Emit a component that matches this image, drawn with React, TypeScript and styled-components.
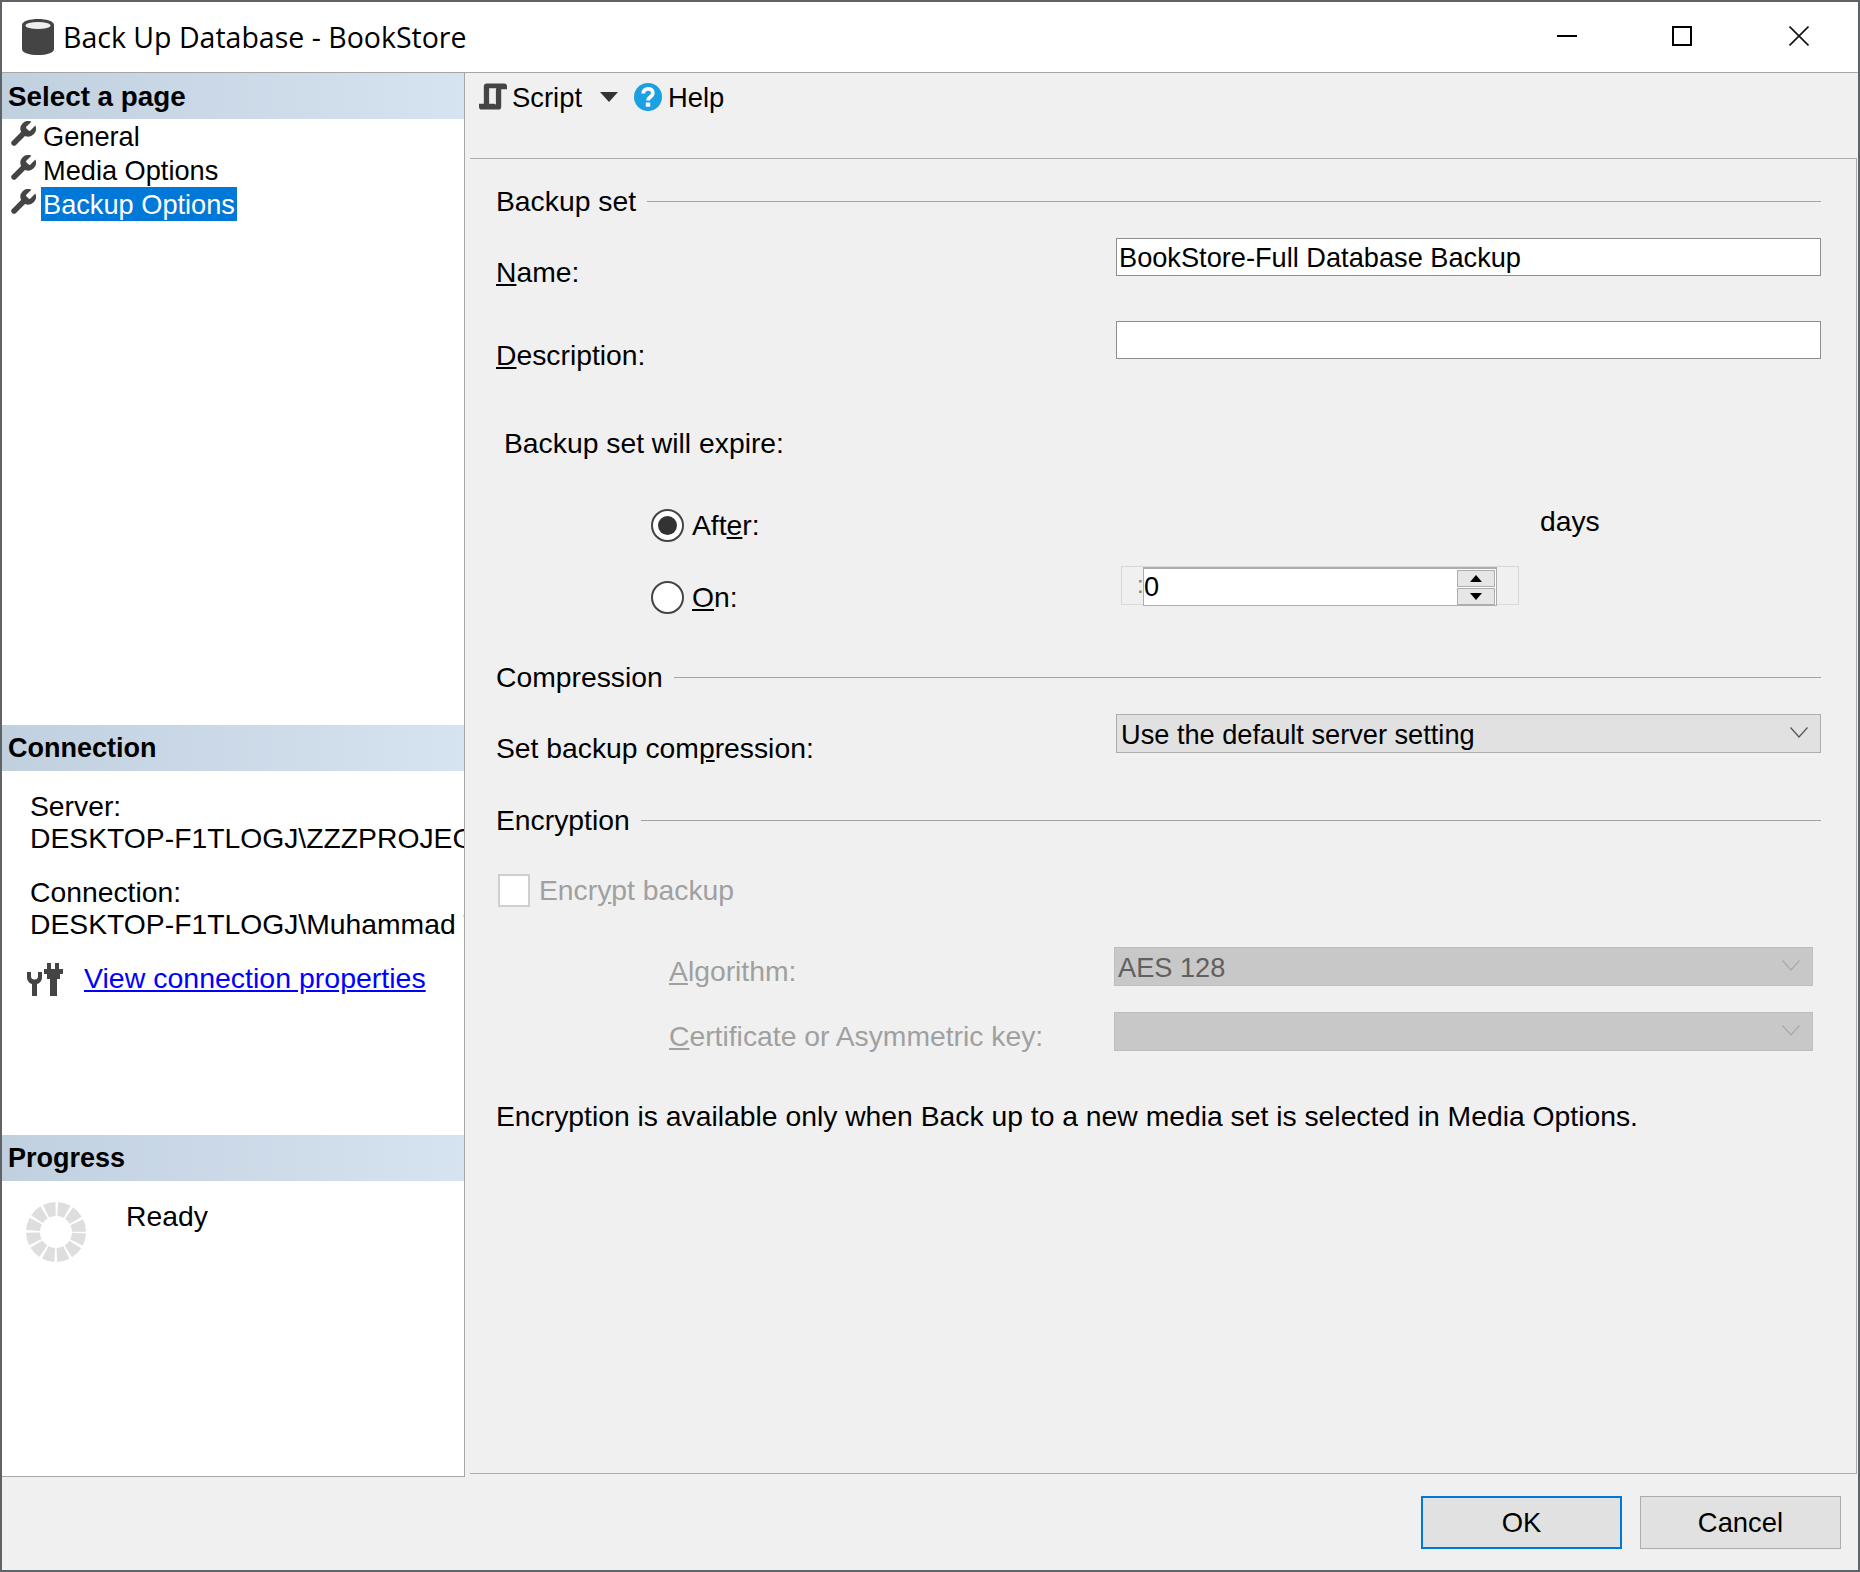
import React from "react";
import styled, { createGlobalStyle } from "styled-components";

const Global = createGlobalStyle`
  html, body { margin: 0; padding: 0; background: #f0f0f0; }
  body { font-family: "Liberation Sans", Arial, sans-serif; font-size: 28.3px; color: #000; }
  * { box-sizing: border-box; }
`;

const Win = styled.div`
  width: 1860px; height: 1572px; border: 2px solid #5f6368;
  display: flex; flex-direction: column; background: #f0f0f0; overflow: hidden;
`;
const TitleBar = styled.div`
  height: 71px; flex: none; background: #fff; border-bottom: 1px solid #a6a6a6;
  display: flex; align-items: center; padding-left: 20px;
`;
const TitleText = styled.div`
  font-family: "Open Sans", sans-serif; font-size: 28.5px; margin-left: 9px; margin-top: -1px; white-space: nowrap; flex: 1;
`;
const WinButtons = styled.div`
  display: flex; align-items: center; gap: 0; margin-right: 49px; margin-top: -2px;
`;
const WinBtn = styled.svg<{ $ml: number }>`
  width: 20px; height: 20px; margin-left: ${p => p.$ml}px; display: block;
`;
const Body = styled.div`
  flex: 1; display: flex; min-height: 0;
`;
const Sidebar = styled.div`
  width: 463px; height: 1404px; flex: none; background: #fff;
  border-right: 1px solid #a6a6a6; border-bottom: 1px solid #a6a6a6;
  display: flex; flex-direction: column;
`;
const Section = styled.div<{ $h?: number }>`
  height: ${p => (p.$h ? `${p.$h}px` : "auto")}; flex: ${p => (p.$h ? "none" : "1")}; overflow: hidden;
`;
const SectionHead = styled.div<{ $fs?: number }>`
  height: 46px; background: linear-gradient(90deg, #c1d0df, #d6e3f1);
  display: flex; align-items: center; padding: 1px 0 0 6px; font-weight: 700; font-size: ${p => p.$fs ?? 27}px;
`;
const PageItem = styled.div`
  height: 34px; display: flex; align-items: center; padding-left: 8px;
`;
const PageIcon = styled.svg`
  width: 26px; height: 26px; flex: none; margin-top: -4px;
`;
const PageName = styled.span<{ $sel?: boolean }>`
  margin-left: 5px; padding: 2px 2px 0; height: 34px; line-height: 32px; white-space: nowrap; font-size: 27.2px;
  background: ${p => (p.$sel ? "#0078d7" : "transparent")};
  color: ${p => (p.$sel ? "#fff" : "#000")};
`;
const ConnBlock = styled.div`
  padding: 19px 0 0 28px; line-height: 32px; white-space: nowrap; overflow: hidden;
`;
const ConnPara = styled.div`
  margin-bottom: 22px;
`;
const LinkRow = styled.div`
  display: flex; align-items: center; margin: 1px 0 0 24px;
`;
const LinkIcon = styled.svg`
  width: 38px; height: 34px; flex: none;
`;
const BlueLink = styled.a`
  color: #0000ff; text-decoration: underline; margin-left: 20px; white-space: nowrap; margin-top: -3px; font-size: 28.5px;
`;
const ProgressRow = styled.div`
  display: flex; align-items: flex-start; padding: 19px 0 0 22px;
`;
const SpinnerSvg = styled.svg`
  width: 64px; height: 64px; flex: none;
`;
const Ready = styled.div`
  margin-left: 38px; line-height: 30px; margin-top: 1px;
`;
const Main = styled.div`
  flex: 1; display: flex; flex-direction: column; padding-left: 5px; min-width: 0;
`;
const Toolbar = styled.div`
  height: 85px; flex: none; display: flex; align-items: flex-start; padding: 10px 0 0 9px; font-size: 27.4px;
`;
const ToolIcon = styled.svg<{ $ml?: number }>`
  width: 28px; height: 28px; flex: none; margin-left: ${p => p.$ml ?? 0}px;
`;
const ToolText = styled.span<{ $ml: number }>`
  margin-left: ${p => p.$ml}px; line-height: 30px;
`;
const Caret = styled.div`
  width: 0; height: 0; margin: 9px 0 0 18px; border-left: 9px solid transparent; border-right: 9px solid transparent;
  border-top: 10px solid #333;
`;
const Pane = styled.div`
  width: 1387px; height: 1316px; flex: none; border: 1px solid #adadad; border-left: 0;
  padding: 0 35px 0 26px; display: flex; flex-direction: column;
`;
const GroupHead = styled.div<{ $mt: number }>`
  display: flex; align-items: center; gap: 11px; height: 30px; margin-top: ${p => p.$mt}px; white-space: nowrap;
  &::after { content: ""; flex: 1; height: 1px; background: #a3a3a3; }
`;
const FieldRow = styled.div<{ $mt: number; $h: number; $cols?: string }>`
  display: grid; grid-template-columns: ${p => p.$cols ?? "620px 705px"}; height: ${p => p.$h}px; margin-top: ${p => p.$mt}px;
`;
const FieldLabel = styled.div<{ $pt?: number; $off?: boolean; $pl?: number }>`
  padding-top: ${p => p.$pt ?? 19}px; padding-left: ${p => p.$pl ?? 0}px; line-height: 30px; white-space: nowrap;
  color: ${p => (p.$off ? "#a0a0a0" : "#000")};
`;
const TextBox = styled.div`
  height: 38px; background: #fff; border: 1px solid #8e8e8e; padding-left: 2px; line-height: 37px; white-space: nowrap; font-size: 27.2px;
`;
const Combo = styled.div<{ $off?: boolean }>`
  height: 39px; display: flex; align-items: center; justify-content: space-between; padding: 2px 12px 0 ${p => (p.$off ? 3 : 4)}px; font-size: 27.2px;
  background: ${p => (p.$off ? "#c8c8c8" : "#e1e1e1")}; border: 1px solid ${p => (p.$off ? "#bdbdbd" : "#adadad")};
  color: ${p => (p.$off ? "#606060" : "#000")};
`;
const Chevron = styled.svg`
  width: 18px; height: 11px; flex: none; margin-top: -4px;
`;
const SubHead = styled.div<{ $mt: number }>`
  margin: ${p => p.$mt}px 0 0 8px; line-height: 30px;
`;
const Expire = styled.div`
  display: flex; margin: 49px 0 0 155px; height: 155px;
`;
const RadioCol = styled.div`
  width: 470px; display: flex; flex-direction: column; gap: 40px; padding-top: 2px; flex: none;
`;
const RadioRow = styled.div`
  display: flex; align-items: center; height: 32px; gap: 8px;
`;
const RadioMark = styled.div<{ $on?: boolean }>`
  width: 33px; height: 33px; border-radius: 50%; border: 2px solid #444; background: #fff; flex: none;
  display: flex; align-items: center; justify-content: center;
  &::after { content: ""; width: 19px; height: 19px; border-radius: 50%; background: ${p => (p.$on ? "#333" : "transparent")}; }
`;
const SpinCol = styled.div`
  flex: 1; display: flex; flex-direction: column;
`;
const Days = styled.div`
  margin: -1px 0 0 419px; line-height: 30px;
`;
const SpinGhost = styled.div`
  position: relative; width: 398px; height: 39px; margin-top: 30px; border: 1px solid #d8d8d8;
  padding-left: 15px; line-height: 35px; color: #8a7f78; font-size: 24px;
`;
const SpinBox = styled.div`
  position: absolute; left: 21px; top: 0; width: 354px; height: 39px; background: #fff; border: 1px solid #adadad;
  border-top-width: 2px; padding-left: 0; line-height: 35px; color: #000; font-size: 27.2px;
`;
const SpinBtns = styled.div`
  position: absolute; right: 1px; top: 1px; width: 38px; display: flex; flex-direction: column; gap: 1px;
`;
const SpinBtn = styled.div<{ $up?: boolean }>`
  height: 17px; background: #e6e6e6; border: 1px solid #adadad; display: flex; align-items: center; justify-content: center;
  &::after {
    content: ""; width: 0; height: 0; border-left: 6px solid transparent; border-right: 6px solid transparent;
    ${p => (p.$up ? "border-bottom: 7px solid #000;" : "border-top: 7px solid #000;")}
  }
`;
const CheckRow = styled.div`
  display: flex; align-items: center; height: 32px; margin-top: 39px; color: #a0a0a0;
`;
const CheckBox = styled.div`
  width: 32px; height: 33px; background: #fff; border: 2px solid #cfcfcf; margin: 0 9px 0 2px; flex: none;
`;
const Info = styled.div`
  line-height: 30px; margin-top: 50px; white-space: nowrap;
`;
const Footer = styled.div`
  display: flex; justify-content: flex-end; gap: 18px; padding: 22px 17px 0 0;
`;
const Btn = styled.div<{ $primary?: boolean }>`
  width: 201px; height: 53px; display: flex; align-items: center; justify-content: center; background: #e1e1e1; font-size: 27.4px; padding-top: 1px;
  border: ${p => (p.$primary ? "2px solid #0078d7" : "1.5px solid #adadad")};
`;

const wrench = "M14.7 6.3a1 1 0 0 0 0 1.4l1.6 1.6a1 1 0 0 0 1.4 0l3.77-3.77a6 6 0 0 1-7.94 7.94l-6.91 6.91a2.12 2.12 0 0 1-3-3l6.91-6.91a6 6 0 0 1 7.94-7.94l-3.76 3.76z";

const Wrench = () => (
  <PageIcon viewBox="2 2 20 20"><path d={wrench} fill="#444" /></PageIcon>
);

const chevron = "M0.5 0.5L9 10L17.5 0.5";

export default function App() {
  return (
    <>
      <Global />
      <Win>
        <TitleBar>
          <svg width="32" height="36" viewBox="0 0 32 36" style={{ flex: "none" }}>
            <path d="M0 6c0-8 32-8 32 0v24c0 8-32 8-32 0z" fill="#444" />
            <ellipse cx="16" cy="6.5" rx="12.5" ry="3.6" fill="#eee" />
          </svg>
          <TitleText>Back Up Database - BookStore</TitleText>
          <WinButtons>
            <WinBtn $ml={0} viewBox="0 0 20 20"><path d="M0 10h20" stroke="#000" strokeWidth="2" /></WinBtn>
            <WinBtn $ml={95} viewBox="0 0 20 20"><rect x="1" y="1" width="18" height="18" fill="none" stroke="#000" strokeWidth="2" /></WinBtn>
            <WinBtn $ml={97} viewBox="0 0 20 20"><path d="M0.5 0.5l19 19M19.5 0.5l-19 19" stroke="#111" strokeWidth="1.6" fill="none" /></WinBtn>
          </WinButtons>
        </TitleBar>
        <Body>
          <Sidebar>
            <Section $h={652}>
              <SectionHead $fs={27.8}>Select a page</SectionHead>
              <PageItem><Wrench /><PageName>General</PageName></PageItem>
              <PageItem><Wrench /><PageName>Media Options</PageName></PageItem>
              <PageItem><Wrench /><PageName $sel>Backup Options</PageName></PageItem>
            </Section>
            <Section $h={410}>
              <SectionHead>Connection</SectionHead>
              <ConnBlock>
                <ConnPara>Server:<br />DESKTOP-F1TLOGJ\ZZZPROJECTS</ConnPara>
                <ConnPara>Connection:<br />DESKTOP-F1TLOGJ\Muhammad Waqar</ConnPara>
              </ConnBlock>
              <LinkRow>
                <LinkIcon viewBox="0 0 38 34">
                  <path d="M1 9h4v4a3.5 3.5 0 0 0 7 0V9h4v6a7 7 0 0 1-5 6v12H6V21a7 7 0 0 1-5-6z" fill="#444" />
                  <rect x="21" y="0" width="4" height="7" fill="#444" />
                  <rect x="29" y="0" width="4" height="7" fill="#444" />
                  <path d="M18 6h19v5h-3v5h-3v17h-7V16h-3v-5h-3z" fill="#444" />
                </LinkIcon>
                <BlueLink href="#">View connection properties</BlueLink>
              </LinkRow>
            </Section>
            <Section>
              <SectionHead>Progress</SectionHead>
              <ProgressRow>
                <SpinnerSvg viewBox="0 0 64 64">
                  <circle cx="32" cy="32" r="23" fill="none" stroke="#dedede" strokeWidth="14" strokeDasharray="9.8 2.24" strokeDashoffset="-1.12" />
                </SpinnerSvg>
                <Ready>Ready</Ready>
              </ProgressRow>
            </Section>
          </Sidebar>
          <Main>
            <Toolbar>
              <ToolIcon viewBox="0 0 29 28">
                <path fillRule="evenodd" d="M5 3a3 3 0 0 1 3-3h18a3 3 0 0 1 3 3v3h-6v18a3 3 0 0 1-3 3H3a3 3 0 0 1-3-3v-3h5zM10.5 5v16h5a3 3 0 0 1 2 1V6a4 4 0 0 1 .6-1z" fill="#444" />
              </ToolIcon>
              <ToolText $ml={5}>Script</ToolText>
              <Caret />
              <ToolIcon $ml={16} viewBox="0 0 28 28">
                <circle cx="14" cy="14" r="14" fill="#1ba1e2" />
                <path d="M9.3 10.5c0-6.2 9.6-6.2 9.6-.5 0 4-4.9 4-4.9 7.5" fill="none" stroke="#fff" strokeWidth="3.8" />
                <rect x="11.8" y="19.5" width="4.4" height="4.2" fill="#fff" />
              </ToolIcon>
              <ToolText $ml={6}>Help</ToolText>
            </Toolbar>
            <Pane>
              <GroupHead $mt={27}>Backup set</GroupHead>
              <FieldRow $mt={22} $h={83}>
                <FieldLabel><u>N</u>ame:</FieldLabel>
                <TextBox>BookStore-Full Database Backup</TextBox>
              </FieldRow>
              <FieldRow $mt={0} $h={60}>
                <FieldLabel><u>D</u>escription:</FieldLabel>
                <TextBox />
              </FieldRow>
              <SubHead $mt={47}>Backup set will expire:</SubHead>
              <Expire>
                <RadioCol>
                  <RadioRow><RadioMark $on /><span>Aft<u>e</u>r:</span></RadioRow>
                  <RadioRow><RadioMark /><span><u>O</u>n:</span></RadioRow>
                </RadioCol>
                <SpinCol>
                  <Days>days</Days>
                  <SpinGhost>:
                    <SpinBox>0
                      <SpinBtns><SpinBtn $up /><SpinBtn /></SpinBtns>
                    </SpinBox>
                  </SpinGhost>
                </SpinCol>
              </Expire>
              <GroupHead $mt={0}>Compression</GroupHead>
              <FieldRow $mt={22} $h={60}>
                <FieldLabel>Set backup com<u>p</u>ression:</FieldLabel>
                <Combo>Use the default server setting
                  <Chevron viewBox="0 0 18 11"><path d={chevron} fill="none" stroke="#555" strokeWidth="1.2" /></Chevron>
                </Combo>
              </FieldRow>
              <GroupHead $mt={31}>Encryption</GroupHead>
              <CheckRow><CheckBox /><span>Encr<u>y</u>pt backup</span></CheckRow>
              <FieldRow $mt={41} $h={65} $cols="618px 699px">
                <FieldLabel $off $pl={173} $pt={9}><u>A</u>lgorithm:</FieldLabel>
                <Combo $off>AES 128
                  <Chevron viewBox="0 0 18 11"><path d={chevron} fill="none" stroke="#aaa" strokeWidth="1.2" /></Chevron>
                </Combo>
              </FieldRow>
              <FieldRow $mt={0} $h={39} $cols="618px 699px">
                <FieldLabel $off $pl={173} $pt={9}><u>C</u>ertificate or Asymmetric key:</FieldLabel>
                <Combo $off>
                  <span />
                  <Chevron viewBox="0 0 18 11"><path d={chevron} fill="none" stroke="#aaa" strokeWidth="1.2" /></Chevron>
                </Combo>
              </FieldRow>
              <Info>Encryption is available only when Back up to a new media set is selected in Media Options.</Info>
            </Pane>
            <Footer>
              <Btn $primary>OK</Btn>
              <Btn>Cancel</Btn>
            </Footer>
          </Main>
        </Body>
      </Win>
    </>
  );
}
